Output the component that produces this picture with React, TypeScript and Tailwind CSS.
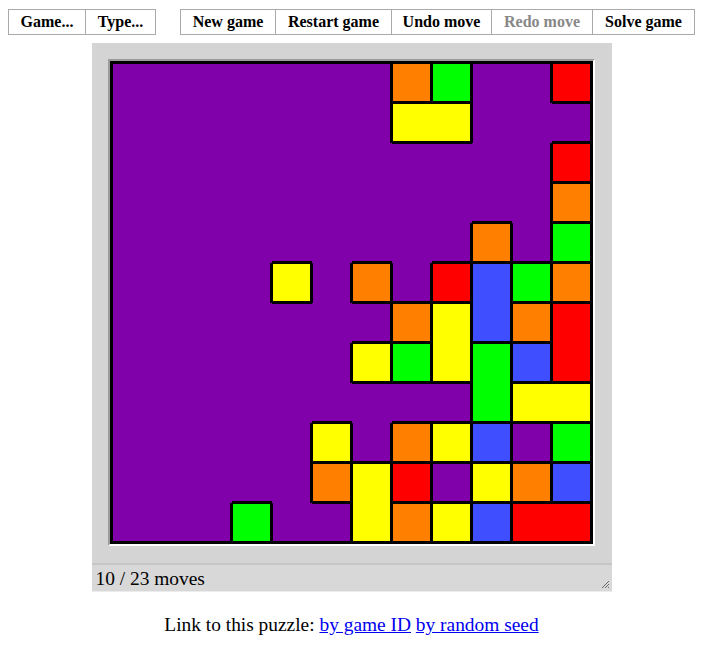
import React from "react";

const rows = [
  "PPPPPPPOGPPR",
  "PPPPPPPYYPPP",
  "PPPPPPPPPPPR",
  "PPPPPPPPPPPO",
  "PPPPPPPPPOPG",
  "PPPPYPOPRBGO",
  "PPPPPPPOYBOR",
  "PPPPPPYGYGBR",
  "PPPPPPPPPGYY",
  "PPPPPYPOYBPG",
  "PPPPPOYRPYOB",
  "PPPGPPYOYBRR",
];

const colorClass: Record<string, string> = {
  P: "bg-[#8000aa]",
  O: "bg-[#ff8000]",
  G: "bg-[#00ff00]",
  R: "bg-[#ff0000]",
  Y: "bg-[#ffff00]",
  B: "bg-[#3f4fff]",
};

function Cell({ r, c }: { r: number; c: number }) {
  const v = rows[r][c];
  const top = r === 0 || rows[r - 1][c] !== v;
  const bottom = r === 11 || rows[r + 1][c] !== v;
  const left = c === 0 || rows[r][c - 1] !== v;
  const right = c === 11 || rows[r][c + 1] !== v;
  return (
    <div
      className={[
        "w-10 h-10 bg-black",
        top ? "pt-px" : "",
        left ? "pl-px" : "",
        bottom ? "pb-0.5" : "",
        right ? "pr-0.5" : "",
      ].join(" ")}
    >
      <div className={"w-full h-full " + colorClass[v]} />
    </div>
  );
}

export default function App() {
  return (
    <div className="w-[703px] h-[656px] bg-white text-black font-['Liberation_Serif',serif]">
      <div className="flex items-start pt-[9px] pl-[8px]">
        <div className="flex border border-[#aaaaaa] h-[26px] text-[16px] font-bold leading-none">
          <div className="w-[76px] flex items-center justify-center">Game...</div>
          <div className="w-[70px] flex items-center justify-center border-l border-[#aaaaaa]">Type...</div>
        </div>
        <div className="ml-[24px] flex border border-[#aaaaaa] h-[26px] text-[16px] font-bold leading-none">
          <div className="w-[94px] flex items-center justify-center">New game</div>
          <div className="w-[116px] flex items-center justify-center border-l border-[#aaaaaa]">Restart game</div>
          <div className="w-[100px] flex items-center justify-center border-l border-[#aaaaaa]">Undo move</div>
          <div className="w-[101px] flex items-center justify-center border-l border-[#aaaaaa] text-[#888888]">Redo move</div>
          <div className="w-[102px] flex items-center justify-center border-l border-[#aaaaaa]">Solve game</div>
        </div>
      </div>

      <div className="mx-auto mt-[8px] w-[520px]">
        <div className="h-[520px] bg-[#d4d4d4] pt-[16px] pl-[16px]">
          <div className="w-[487px] border-t-2 border-l-2 border-b-2 border-r-2 border-t-[#9c9c9c] border-l-[#9c9c9c] border-b-white border-r-white">
            <div className="border-t-2 border-l-2 border-b border-r border-black">
              <div className="grid grid-cols-12 w-[480px]">
                {rows.map((row, r) =>
                  row.split("").map((_, c) => <Cell key={r + "-" + c} r={r} c={c} />)
                )}
              </div>
            </div>
          </div>
        </div>
        <div className="relative h-[29px] bg-[#d8d8d8] border-t-2 border-[#c6c6c6] border-b border-b-[#ececec] pl-[4px] flex items-center text-[19.4px] leading-none">
          <span className="mt-[1px]">10 / 23 moves</span>
          <svg
            className="absolute right-[2px] bottom-[2px]"
            width="10"
            height="10"
            viewBox="0 0 10 10"
          >
            <line x1="9" y1="2" x2="2" y2="9" stroke="#6a6a6a" strokeWidth="1" />
            <line x1="9" y1="5" x2="5" y2="9" stroke="#6a6a6a" strokeWidth="1" />
            <line x1="9" y1="8" x2="8" y2="9" stroke="#6a6a6a" strokeWidth="1" />
          </svg>
        </div>
      </div>

      <div className="mt-[22px] text-center text-[19.4px] leading-[22px]">
        Link to this puzzle:{" "}
        <a className="text-[#0000ee] underline" href="#">by game ID</a>{" "}
        <a className="text-[#0000ee] underline" href="#">by random seed</a>
      </div>
    </div>
  );
}
